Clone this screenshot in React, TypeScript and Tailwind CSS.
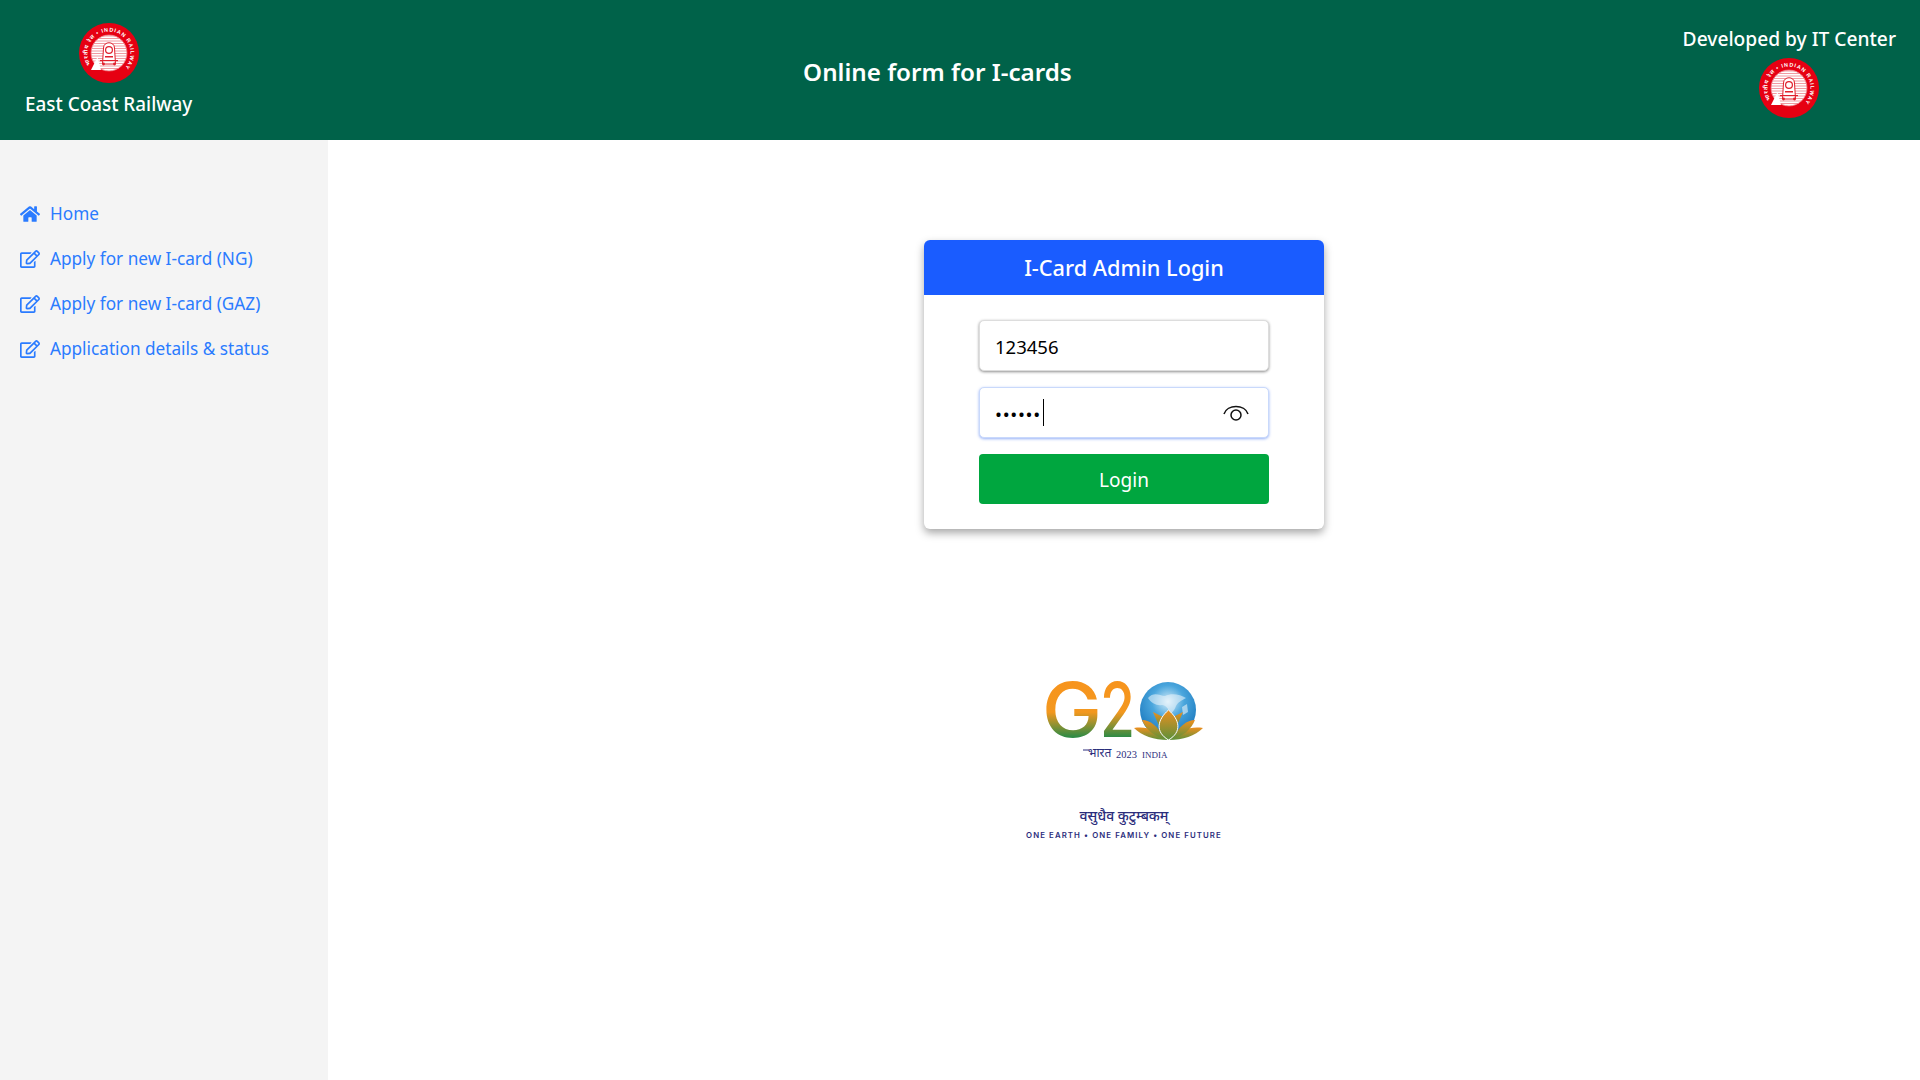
import React from "react";
import { FaHome, FaRegEdit } from "react-icons/fa";

function Emblem({ id }: { id: string }) {
  return (
    <svg width="60" height="60" viewBox="0 0 60 60" className="block">
      <defs>
        <path id={`${id}-arc`} d="M13.5 43.800 A21.500 21.500 0 1 1 46.500 43.800" fill="none" />
        <clipPath id={`${id}-clip`}><circle cx="30" cy="30" r="18" /></clipPath>
      </defs>
      <circle cx="30" cy="30" r="30" fill="#e60012" />
      <circle cx="30" cy="30" r="18" fill="#ffffff" />
      <g clipPath={`url(#${id}-clip)`} stroke="#f09aa1" strokeWidth="1">
        {[13, 15.500, 18, 20.500, 23, 25.500, 28, 30.500, 33, 35.500, 38, 40.500, 43, 45.500].map((y) => (
          <line key={y} x1="10" x2="50" y1={y} y2={y} />
        ))}
      </g>
      <circle cx="30" cy="30" r="18" fill="none" stroke="#ec6c77" strokeWidth="0.8" />
      <path d="M24.500 25 C24.500 18 35.500 18 35.500 25 L36.500 41 L23.500 41 Z" fill="#fff" stroke="#e01f2c" strokeWidth="1" />
      <circle cx="30" cy="27" r="3.400" fill="#fff" stroke="#e01f2c" strokeWidth="1.200" />
      <rect x="26" y="33" width="8" height="1.500" fill="#e01f2c" />
      <rect x="21" y="37" width="18" height="1.200" fill="#e01f2c" />
      <circle cx="24.500" cy="41" r="1.400" fill="#e01f2c" />
      <circle cx="35.500" cy="41" r="1.400" fill="#e01f2c" />
      <path d="M12 47 L18.500 34 L22 47 Z" fill="#fff" />
      <text fill="#ffffff" fontSize="5.400" fontWeight="700" style={{ fontFamily: '"Liberation Sans", "Noto Sans", sans-serif' }}>
        <textPath href={`#${id}-arc`} startOffset="3" textLength="99" lengthAdjust="spacing">भारतीय रेल • INDIAN RAILWAYS</textPath>
      </text>
    </svg>
  );
}

function G20() {
  const serif = { fontFamily: '"Liberation Serif", serif' };
  return (
    <svg width="228" height="190" viewBox="0 0 228 190" className="block">
      <defs>
        <linearGradient id="g20" gradientUnits="userSpaceOnUse" x1="0" y1="22" x2="0" y2="77">
          <stop offset="0" stopColor="#f7941d" />
          <stop offset="0.55" stopColor="#f3981f" />
          <stop offset="1" stopColor="#2e8b45" />
        </linearGradient>
        <radialGradient id="globe" cx="0.5" cy="0.35" r="0.72">
          <stop offset="0" stopColor="#d8eef9" />
          <stop offset="0.4" stopColor="#4aa6dd" />
          <stop offset="1" stopColor="#0f6db6" />
        </radialGradient>
        <linearGradient id="lotus" x1="0" y1="0" x2="0" y2="1">
          <stop offset="0" stopColor="#ef8f1f" />
          <stop offset="1" stopColor="#5c913a" />
        </linearGradient>
      </defs>
      <text x="32" y="77" fontSize="76" fontWeight="500" fill="url(#g20)" textLength="60" lengthAdjust="spacingAndGlyphs" style={{ fontFamily: 'Inter, sans-serif' }}>G</text>
      <text x="90" y="77" fontSize="76" fontWeight="500" fill="url(#g20)" textLength="35" lengthAdjust="spacingAndGlyphs" style={{ fontFamily: 'Inter, sans-serif' }}>2</text>
      <circle cx="158" cy="50" r="28" fill="url(#globe)" />
      <path d="M138 38 C144 31 150 36 155 36 C161 33 170 34 176 38 C171 41 168 42 166 46 C165 49 163 52 161 53 C158 49 156 45 152 45 C147 46 141 43 138 38 Z" fill="#eef6fb" opacity="0.55" />
      <path d="M172 47 L177 44 L178 52 L173 55 Z" fill="#e8f2f8" opacity="0.6" />
      <path d="M143 52 L155 58 L150 68 Z" fill="url(#lotus)" />
      <path d="M173 52 L161 58 L166 68 Z" fill="url(#lotus)" />
      <path d="M124 68 C136 66 148 70 158 80 C144 80 132 76 124 68 Z" fill="url(#lotus)" />
      <path d="M193 68 C181 66 169 70 159 80 C173 80 185 76 193 68 Z" fill="url(#lotus)" />
      <path d="M132 60 C140 60 148 66 155 79 C144 76 136 70 132 60 Z" fill="url(#lotus)" />
      <path d="M185 60 C177 60 169 66 162 79 C173 76 181 70 185 60 Z" fill="url(#lotus)" />
      <path d="M158.500 50 C170 60 172 72 158.500 80 C145 72 147 60 158.500 50 Z" fill="url(#lotus)" stroke="#fff" strokeWidth="1" />
      <path d="M73 90 L79 90" stroke="#2b2d7c" strokeWidth="1" />
      <text x="78" y="97" fontSize="12" fill="#2b2d7c" style={{ fontFamily: '"Noto Sans", sans-serif' }}>भारत</text>
      <text x="106" y="98" fontSize="10.500" fill="#2b2d7c" style={serif}>2023</text>
      <text x="132" y="97.500" fontSize="9" fill="#2b2d7c" style={serif}>INDIA</text>
      <text x="114" y="161" textAnchor="middle" fontSize="14" fontWeight="500" fill="#2b2d7c" style={{ fontFamily: '"Noto Sans", sans-serif' }}>वसुधैव कुटुम्बकम्</text>
      <text x="114" y="178" textAnchor="middle" fontSize="7.800" fontWeight="600" fill="#2b2d7c" letterSpacing="1.1" style={{ fontFamily: 'Inter, sans-serif' }}>ONE EARTH • ONE FAMILY • ONE FUTURE</text>
    </svg>
  );
}

const nav = [
  { label: "Home", home: true },
  { label: "Apply for new I-card (NG)" },
  { label: "Apply for new I-card (GAZ)" },
  { label: "Application details & status" },
];

export default function App() {
  return (
    <div className="flex h-[1080px] flex-col overflow-hidden bg-white font-['Noto_Sans',sans-serif]">
      <header className="flex h-[140px] shrink-0 items-center justify-between bg-[#006249] pl-[25px] pr-[24px] text-white">
        <div className="flex flex-col items-center">
          <Emblem id="a" />
          <div className="mt-[8px] text-[18.9px] font-medium leading-[26px]">East Coast Railway</div>
        </div>
        <h1 className="pt-[5px] text-[24.2px] font-semibold">Online form for I-cards</h1>
        <div className="flex flex-col items-center pt-[4px]">
          <div className="mb-[6px] text-[19.2px] font-medium leading-[26px]">Developed by IT Center</div>
          <Emblem id="b" />
        </div>
      </header>
      <div className="flex flex-1">
        <aside className="w-[328px] shrink-0 bg-[#f4f4f4] pt-[51px]">
          <nav className="flex flex-col">
            {nav.map((n) => (
              <a key={n.label} className="flex h-[45px] items-center gap-[10px] pl-[20px] text-[17.2px] text-[#2a7bff]">
                {n.home ? <FaHome className="h-[20px] w-[20px]" /> : <FaRegEdit className="h-[20px] w-[20px]" />}
                <span>{n.label}</span>
              </a>
            ))}
          </nav>
        </aside>
        <main className="flex flex-1 flex-col items-center pt-[100px]">
          <div className="w-[400px] overflow-hidden rounded-[6px] bg-white shadow-[0_4px_8px_rgba(0,0,0,0.35)]">
            <div className="flex h-[55px] items-center justify-center bg-[#1a5cff] pt-[1px] text-[21.7px] font-medium text-white">I-Card Admin Login</div>
            <form className="flex flex-col items-center gap-[16px] px-[55px] pb-[25px] pt-[25px]">
              <input readOnly value="123456" className="h-[51px] w-[290px] rounded-[5px] border border-[#dddddd] bg-white px-[15px] pt-[2px] text-[18.5px] text-black shadow-[0_1px_3px_rgba(0,0,0,0.45)] outline-none" />
              <div className="relative h-[51px] w-[290px]">
                <input readOnly type="password" value="123456" className="h-full w-full rounded-[5px] border border-[#c9d9fb] bg-white px-[15px] pt-[2px] text-[18.5px] tracking-[0.7px] text-black shadow-[0_1px_3px_rgba(60,110,240,0.55)] outline-none" />
                <span className="absolute left-[64px] top-[12px] h-[27px] w-px bg-black" />
                <svg className="absolute right-[20px] top-[16px]" width="26" height="20" viewBox="0 0 26 20" fill="none" stroke="#111" strokeWidth="1.5">
                  <path d="M1 11 C4 1 22 1 25 11" />
                  <circle cx="13" cy="12" r="5" />
                </svg>
              </div>
              <button type="button" className="h-[50px] w-[290px] rounded-[4px] bg-[#00a63f] pt-[2px] text-[19px] text-white">Login</button>
            </form>
          </div>
          <div className="mt-[131px]"><G20 /></div>
        </main>
      </div>
    </div>
  );
}
